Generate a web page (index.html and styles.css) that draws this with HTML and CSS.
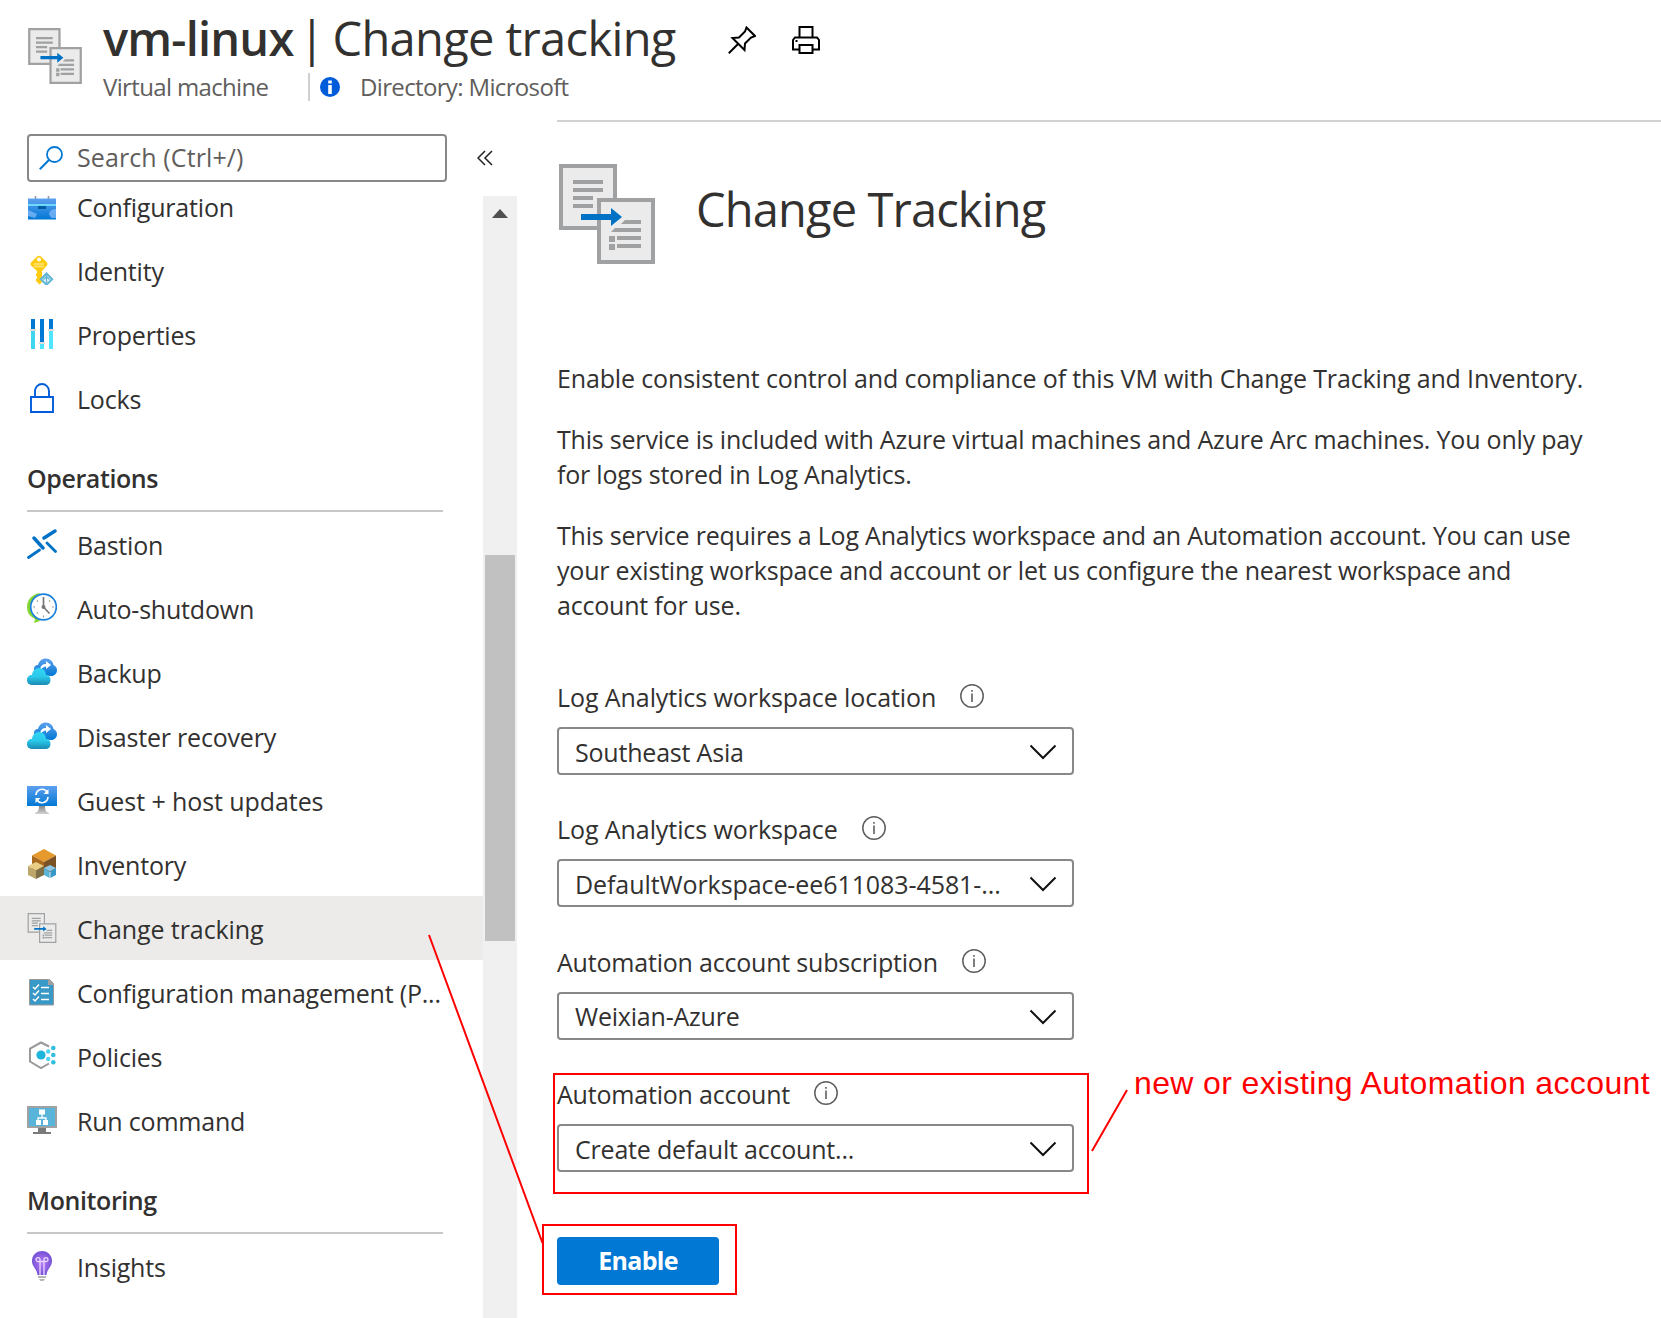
FILE: index.html
```html
<!DOCTYPE html>
<html lang="en">
<head>
<meta charset="utf-8">
<title>vm-linux | Change tracking</title>
<link rel="stylesheet" href="styles.css">
</head>
<body>
<svg class="defs" width="0" height="0">
  <defs>
    <linearGradient id="blue" x1="0" y1="0" x2="0" y2="1"><stop offset="0" stop-color="#5ea0ef"/><stop offset="1" stop-color="#0078d4"/></linearGradient>
    <linearGradient id="teal" x1="0" y1="0" x2="0" y2="1"><stop offset="0" stop-color="#32d4f5"/><stop offset=".5" stop-color="#2cc9ea"/><stop offset="1" stop-color="#198ab3"/></linearGradient>
    <linearGradient id="stand" x1="0" y1="0" x2="0" y2="1"><stop offset="0" stop-color="#888"/><stop offset="1" stop-color="#d2d2d2"/></linearGradient>
    <radialGradient id="purple" cx=".5" cy=".5" r=".6"><stop offset="0" stop-color="#b77af4"/><stop offset="1" stop-color="#6a4bd0"/></radialGradient>
    <symbol id="tracking" viewBox="0 0 96 100">
      <path fill="#ebebeb" stroke="#a0a1a2" stroke-width="4" d="M2 2h54v62H2z"/>
      <path stroke="#a0a1a2" stroke-width="4" d="M14 18h30M14 26h30M14 34h20M14 42h20"/>
      <path fill="#ebebeb" stroke="#a0a1a2" stroke-width="4" d="M40 36h54v62H40z"/>
      <path fill="#a0a1a2" d="M66 56h16v4H62zM56 64h26v4H52zM58 72h24v4H58zM58 80h24v4H58zM50 72h6v6h-6zM50 80h6v6h-6z"/>
      <path fill="#0072c6" d="M22 50h30v-6l11 9-11 9v-6H22z"/>
    </symbol>
    <symbol id="clouds" viewBox="0 0 30 30">
      <path fill="url(#blue)" d="M14 18c-5 0-7-3-7-6 0-2 1-4 4-4C12 4 15 1.500 19 1.500s7 3 7.500 6.500C29 9 30 11 30 13c0 4-3 6-6 6z"/>
      <path fill="#fff" d="M13 12c1-4 3-5 6-5V4l5 4-5 4V9.500c-2 0-4 1-5 4z"/>
      <path fill="url(#teal)" d="M6 28c-4 0-6-2-6-5 0-3 2-5 5-5 .5-4 3-7 7-7 4 0 7 3 7 7 3 0 4.500 2 4.500 5s-2 5-5 5z"/>
    </symbol>
    <symbol id="info" viewBox="0 0 24 24">
      <circle cx="12" cy="12" r="11.200" fill="none" stroke="#605e5c" stroke-width="1.500"/>
      <path fill="#605e5c" d="M11.200 9.500h1.600V18h-1.600zM11.200 6h1.600v1.800h-1.600z"/>
    </symbol>
    <symbol id="chevron" viewBox="0 0 28 16"><path fill="none" stroke="#111" stroke-width="2" d="M1.500 1.500 14 14 26.500 1.500"/></symbol>
  </defs>
</svg>

<header class="header">
  <svg class="header-icon"><use href="#tracking"/></svg>
  <div class="header-text">
    <div class="title-row">
      <h1 class="title"><b class="title-name">vm-linux</b><span class="title-bar">|</span><span>Change tracking</span></h1>
      <svg class="action pin" viewBox="0 0 28 28"><path fill="none" stroke="#000" stroke-width="2" d="M18.500 1.500 27 10l-4 1.500-6 6-.5 6.500L4.500 12l6.500-.5 6-6zM10.500 17.500.8 27.200"/></svg>
      <svg class="action" viewBox="0 0 28 28"><path fill="none" stroke="#000" stroke-width="2" d="M7.500 11V1h13v10M7 23.500H1V14l2-2.500h22l2 2.500v9.500h-6M7.500 19h13v8h-13z"/><path fill="#000" d="M3.500 14h2v2h-2z"/></svg>
    </div>
    <div class="sub-row">
      <span class="sub-type">Virtual machine</span>
      <span class="sub-divider"></span>
      <svg class="sub-info" viewBox="0 0 20 20"><circle cx="10" cy="10" r="10" fill="#015cda"/><path fill="#fff" d="M8.200 8h3.600v9H8.200zM8.200 3.500h3.600v3H8.200z"/></svg>
      <span>Directory: Microsoft</span>
    </div>
  </div>
</header>

<div class="body">
  <aside class="sidebar">
    <div class="search-row">
      <div class="search">
        <svg class="search-icon" viewBox="0 0 24 24"><circle cx="15.500" cy="8.500" r="7.500" fill="none" stroke="#0078d4" stroke-width="1.800"/><path stroke="#0078d4" stroke-width="2" d="M10.200 13.800.8 23.200"/></svg>
        <span>Search (Ctrl+/)</span>
      </div>
      <svg class="collapse" viewBox="0 0 16 16"><path fill="none" stroke="#222" stroke-width="1.500" d="M8 1 1 8l7 7M15 1 8 8l7 7"/></svg>
    </div>
    <div class="list">
      <nav class="nav">
        <a class="item"><svg class="icon" viewBox="0 0 30 30"><path stroke="#999" stroke-width="1.600" d="M8.500 3v5M21.500 3v5"/><path fill="url(#blue)" d="M1 7.500h28v21H1z"/><path fill="#6fd8fb" d="M1 13h28v2H1z"/><path fill="#005ba1" d="M11 15h8v3h-8z"/><path fill="#83b9f9" opacity=".75" d="M1 19l9 4-2 4-7-2zM29 18c-7 0-9 6-4 9h4z"/></svg><span>Configuration</span></a>
        <a class="item"><svg class="icon" viewBox="0 0 30 30"><path fill="#ffcb12" d="M10 1.500Q12 0 14 1.500l6 6q1 1.500 0 3L15 16v11l-2.500 2.500L9 26v-2l1.500-1.500L9 21v-2l1-1v-2L4 10.500q-1-1.500 0-3z"/><path fill="#fff" d="M12 2.500a2 2 0 1 1 0 4 2 2 0 0 1 0-4z"/><path stroke="#ffe57d" stroke-width="1.500" d="M7 9h10M7 11.500h10"/><path fill="#e8f7fb" stroke="#60b5d5" stroke-width="2" d="m19.500 18.500 5.700 5.700-5.700 5.500-5.700-5.500z"/><path fill="none" stroke="#60b5d5" stroke-width="1.300" d="M19.500 20v8M16.500 24.500l3-3 3 3"/></svg><span>Identity</span></a>
        <a class="item"><svg class="icon" viewBox="0 0 30 30"><path fill="#0078d4" d="M4 0h4v10H4zM13 0h4v23h-4zM22 0h4v10h-4z"/><path fill="#3fd6ee" d="M4 12h4v18H4z"/><path fill="#50e6ff" d="M13 25h4v5h-4zM22 12h4v18h-4z"/><path fill="#ddd" d="M3 10h6v2H3zM12 23h6v2h-6zM21 10h6v2h-6z"/></svg><span>Properties</span></a>
        <a class="item"><svg class="icon" viewBox="0 0 30 30"><path fill="none" stroke="#015cda" stroke-width="1.900" d="M4 14h22v15H4zM8 14V8a7 7 0 0 1 14 0v6"/></svg><span>Locks</span></a>

        <h2 class="section">Operations</h2>
        <a class="item"><svg class="icon" viewBox="0 0 30 30"><path stroke="#0072c6" stroke-width="3.400" stroke-linecap="round" d="M28 2 17 9M7 9l9 10"/><path stroke="#0072c6" stroke-width="2.800" stroke-linecap="round" d="m20 14 8.500 8.500M1.500 28.500 12.500 21"/></svg><span>Bastion</span></a>
        <a class="item"><svg class="icon" viewBox="0 0 30 30"><path fill="#86d633" d="M13 0C5 1 0 7 0 14c0 5 2 9 8 12l-1 4 6-2-3-4C3 18 3 8 13 0z"/><circle cx="16.500" cy="14" r="12.800" fill="#fff" stroke="#1b80dc" stroke-width="1.700"/><path stroke="#999" stroke-width="1.200" d="M6 14h2M25 14h2M16.500 22.500v2M10 7.500l1 1M23 7.500l-1 1M10 20.500l1-1"/><path fill="none" stroke="#777" stroke-width="1.700" d="M16.500 4v10l6 6.500"/><circle cx="16.500" cy="14" r="2" fill="#777"/></svg><span>Auto-shutdown</span></a>
        <a class="item"><svg class="icon"><use href="#clouds"/></svg><span>Backup</span></a>
        <a class="item"><svg class="icon"><use href="#clouds"/></svg><span>Disaster recovery</span></a>
        <a class="item"><svg class="icon" viewBox="0 0 30 30"><path fill="url(#blue)" d="M0 1h30v20H0z"/><path fill="url(#stand)" d="M12 21h6c0 4 1 6 4 7v1H8v-1c3-1 4-3 4-7z"/><path fill="none" stroke="#fff" stroke-width="1.700" d="M9 10a6 6 0 0 1 11-3M21 12a6 6 0 0 1-11 3"/><path fill="#fff" d="M21.500 4v5h-5zM8.500 18v-5h5z"/></svg><span class="wide">Guest + host updates</span></a>
        <a class="item"><svg class="icon" viewBox="0 0 30 30"><path fill="#e69a2e" d="M17 0l12 6.500-12 6.500L5 6.500z"/><path fill="#a86a1d" d="M5 6.500 17 13v13L5 20z"/><path fill="#7a5226" d="M29 6.500 17 13v13l12-6z"/><path fill="#e8ce84" d="m9 13 8 4-8 4.500L1 17z"/><path fill="#bda669" d="m1 17 8 4.500V30l-8-4z"/><path fill="#7f6f47" d="m17 17-8 4.500V30l8-4z"/><path fill="#8dc8e8" d="m23 16 6 3-6 3.500-6-3.500z"/><path fill="#59b4d9" d="m17 19 5.600 3.500V29L17 26z"/><path fill="#3999c6" d="m29 19-5.600 3.500V29L29 26z"/></svg><span>Inventory</span></a>
        <a class="item selected"><svg class="icon"><use href="#tracking"/></svg><span class="wide">Change tracking</span></a>
        <a class="item"><svg class="icon" viewBox="0 0 30 30"><path fill="#3999c6" stroke="#999" stroke-width="1" d="M2.500 2.500h20L26.500 7v21h-24z"/><path fill="#a0a1a2" d="M21 2h1.500L27 6.500V8h-6z"/><path fill="none" stroke="#fff" stroke-width="1.500" d="M14 10.500h8M14 16.500h8M14 22.500h8M6 10l2 2 4-4.500M6 16l2 2 4-4.500M6 22l2 2 4-4.500"/></svg><span>Configuration management (P...</span></a>
        <a class="item"><svg class="icon" viewBox="0 0 30 30"><path fill="none" stroke="#999" stroke-width="2" d="M22 5.500 14 1.500 3 7.500v13l11 6.500 8-4.500"/><circle cx="14" cy="14" r="4.600" fill="#1eb5dc"/><g fill="#50d5f5"><circle cx="21.200" cy="10.500" r="2.200"/><circle cx="21.200" cy="18" r="2.200"/></g><g fill="#32bedd"><circle cx="26.300" cy="7" r="2.300"/><circle cx="26.300" cy="14" r="2.300"/><circle cx="26.300" cy="21.300" r="2.300"/></g></svg><span>Policies</span></a>
        <a class="item"><svg class="icon" viewBox="0 0 30 30"><path fill="#59b4d9" stroke="#a0a1a2" stroke-width="2" d="M1 2h28v20H1z"/><path fill="#7a7a7a" d="M11 23h8v4h5v2H6v-2h5z"/><path fill="none" stroke="#fff" stroke-width="1.300" d="M15 9v4M11 16v-3h8v3"/><path fill="#fff" d="M12 4.500h6v5h-6zM9 15h5v5H9zM16 15h5v5h-5z"/></svg><span>Run command</span></a>

        <h2 class="section">Monitoring</h2>
        <a class="item"><svg class="icon" viewBox="0 0 30 30"><path fill="url(#purple)" d="M15 0c6 0 10 4.500 10 10 0 6-5 8-5.500 14h-9C10 18 5 16 5 10 5 4.500 9 0 15 0z"/><path fill="#b5b5b5" d="M11 25h8v2h-8zM12 28h6l-1.500 2h-3z"/><path fill="none" stroke="#ead8ff" stroke-width="1.300" d="M13 24V10.500h4V24M13 10.500h-1.500a2 2 0 1 1 1.500-2zM17 10.500h1.500a2 2 0 1 0-1.500-2z"/></svg><span>Insights</span></a>
      </nav>
      <div class="scrollbar">
        <svg class="arrow" viewBox="0 0 16 9"><path fill="#505050" d="M0 9 8 0l8 9z"/></svg>
        <div class="thumb"></div>
      </div>
    </div>
  </aside>

  <main class="main">
    <div class="hero">
      <svg class="hero-icon"><use href="#tracking"/></svg>
      <h2 class="hero-title">Change Tracking</h2>
    </div>
    <div class="copy">
      <p class="lead">Enable consistent control and compliance of this VM with Change Tracking and Inventory.</p>
      <p>This service is included with Azure virtual machines and Azure Arc machines. You only pay<br>for logs stored in Log Analytics.</p>
      <p>This service requires a Log Analytics workspace and an Automation account. You can use<br>your existing workspace and account or let us configure the nearest workspace and<br>account for use.</p>
    </div>
    <div class="form">
      <div class="field">
        <div class="label"><span class="wide">Log Analytics workspace location</span><svg class="info"><use href="#info"/></svg></div>
        <div class="select"><span>Southeast Asia</span><svg class="chevron"><use href="#chevron"/></svg></div>
      </div>
      <div class="field">
        <div class="label"><span class="wide">Log Analytics workspace</span><svg class="info"><use href="#info"/></svg></div>
        <div class="select"><span class="wide">DefaultWorkspace-ee611083-4581-...</span><svg class="chevron"><use href="#chevron"/></svg></div>
      </div>
      <div class="field">
        <div class="label"><span>Automation account subscription</span><svg class="info"><use href="#info"/></svg></div>
        <div class="select"><span>Weixian-Azure</span><svg class="chevron"><use href="#chevron"/></svg></div>
      </div>
      <div class="field">
        <div class="label"><span>Automation account</span><svg class="info"><use href="#info"/></svg></div>
        <div class="select"><span>Create default account...</span><svg class="chevron"><use href="#chevron"/></svg></div>
      </div>
    </div>
    <button class="enable">Enable</button>
  </main>
</div>

<svg class="marks" viewBox="0 0 1661 1318">
  <g fill="none" stroke="#f00" stroke-width="2">
    <path d="M554 1074h534v119H554z"/>
    <path d="M543 1225h193v69H543z"/>
    <path d="M429 935 542.500 1243M1127 1090l-35 61"/>
  </g>
</svg>
<div class="note">new or existing Automation account</div>
</body>
</html>
```
FILE: styles.css
```css
* { box-sizing: border-box; }

body {
  margin: 0;
  width: 1661px;
  height: 1318px;
  overflow: hidden;
  position: relative;
  display: flex;
  flex-direction: column;
  background: #fff;
  color: #323130;
  font: 25px/35px "Open Sans", "Noto Sans", sans-serif;
  letter-spacing: -0.2px;
}

.defs { position: absolute; }
svg { display: block; flex: none; }
h1, h2, p { margin: 0; font-weight: 400; }
.wide { letter-spacing: -0.08px; }

/* Header */
.header { display: flex; height: 120px; padding: 0 0 0 28px; flex: none; }
.header-icon { width: 54px; height: 56px; margin: 28px 21px 0 0; }
.title-row { display: flex; align-items: center; height: 69px; padding-top: 11px; }
.title { display: flex; font-size: 47px; line-height: 60px; letter-spacing: -0.65px; width: 625px; margin-top: -4px; white-space: nowrap; }
.title-name { font-weight: 600; letter-spacing: -0.8px; }
.title-bar { width: 39px; padding-right: 3px; text-align: center; }
.action { width: 28px; height: 28px; margin-right: 36px; }
.sub-row { display: flex; align-items: center; height: 35px; color: #605e5c; font-size: 24px; letter-spacing: -0.65px; white-space: nowrap; }
.sub-type { width: 205px; }
.sub-divider { width: 2px; height: 28px; background: #d2d0ce; margin-right: 10px; }
.sub-info { width: 20px; height: 20px; margin-right: 20px; }

/* Sidebar */
.body { display: flex; flex: 1; min-height: 0; }
.sidebar { width: 557px; flex: none; display: flex; flex-direction: column; }
.search-row { display: flex; align-items: center; gap: 30px; padding: 14px 0 14px 27px; flex: none; }
.search { display: flex; align-items: center; gap: 14px; width: 420px; height: 48px; padding: 0 0 1px 10px; border: 2px solid #8a8886; border-radius: 4px; color: #605e5c; letter-spacing: 0.1px; }
.search-icon { width: 24px; height: 24px; }
.collapse { width: 16px; height: 16px; }
.list { display: flex; flex: 1; min-height: 0; overflow: hidden; }
.nav { width: 483px; margin-top: -22px; }
.item { display: flex; align-items: center; gap: 20px; height: 64px; padding-left: 27px; white-space: nowrap; }
.item span { padding-top: 3px; }
.icon { width: 30px; height: 30px; }
.selected { background: #edebe9; }
.section { height: 82px; width: 416px; margin-left: 27px; padding-top: 31px; border-bottom: 2px solid #c8c8c8; font-size: 25px; font-weight: 600; letter-spacing: -0.4px; }
.scrollbar { width: 34px; background: #f0f0f0; padding: 13px 2px 0; }
.arrow { width: 16px; height: 9px; margin: 0 7px 337px; }
.thumb { height: 386px; background: #c1c1c1; }

/* Main */
.main { flex: 1; border-top: 2px solid #d2d2d2; display: flex; flex-direction: column; align-items: flex-start; white-space: nowrap; }
.hero { display: flex; gap: 41px; margin: 42px 0 0 2px; height: 197px; }
.hero-icon { width: 96px; height: 100px; }
.hero-title { font-size: 47px; line-height: 60px; padding-top: 15px; letter-spacing: -0.85px; }
.copy { display: flex; flex-direction: column; gap: 26px; }
.lead { letter-spacing: -0.14px; }
.form { display: flex; flex-direction: column; gap: 37.400px; margin-top: 57px; }
.field { display: flex; flex-direction: column; gap: 12px; }
.label { display: flex; align-items: center; height: 35px; gap: 24px; }
.info { width: 24px; height: 24px; margin-bottom: 3px; }
.select { display: flex; align-items: center; justify-content: space-between; width: 517px; height: 48px; padding: 2px 15px 0 16px; border: 2px solid #8a8886; border-radius: 4px; }
.chevron { width: 28px; height: 16px; }
.enable { width: 162px; height: 48px; margin-top: 65px; border: 0; border-radius: 4px; background: #0078d4; color: #fff; font: 700 25px/44px "Open Sans", sans-serif; letter-spacing: -0.7px; padding: 0 0 3px; }

/* Annotations */
.marks { position: absolute; left: 0; top: 0; width: 1661px; height: 1318px; pointer-events: none; }
.note { position: absolute; left: 1134px; top: 1065px; color: #f00; font: 32px/37px "Liberation Sans", Arial, sans-serif; letter-spacing: 0.37px; white-space: nowrap; }
```
